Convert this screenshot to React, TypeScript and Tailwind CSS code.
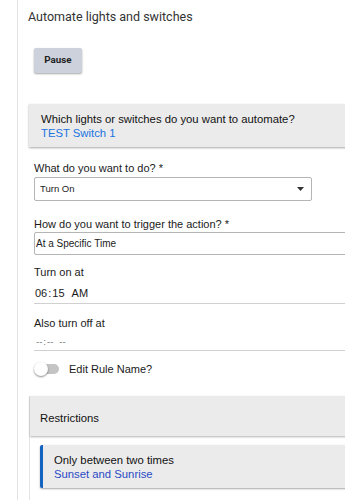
import React from "react";

export default function App() {
  const body = { fontFamily: '"Liberation Sans", Arial, sans-serif' };
  return (
    <div className="w-[345px] h-[500px] overflow-hidden bg-white flex" style={body}>
      <div className="w-[17px] shrink-0" />
      <div className="flex-1 border-l border-[#e2e2e2] flex flex-col min-w-0">
        <div
          className="ml-[10px] mt-[7px] text-[12.5px] leading-[20px] text-[#333] whitespace-nowrap"
          style={{ fontFamily: "Roboto, sans-serif" }}
        >
          Automate lights and switches
        </div>
        <div className="ml-[16px] mt-[19px]">
          <button
            className="w-[48px] h-[25px] bg-[#cdd1dc] rounded-[2px] shadow-[0_1px_2px_rgba(0,0,0,0.35)] text-[9.8px] font-bold text-[#222]"
            style={{ fontFamily: "Roboto, sans-serif" }}
          >
            Pause
          </button>
        </div>

        <div className="ml-[11px] mt-[31px] w-[330px] bg-[#ebebeb] pl-[12px] pt-[8px] pb-[7px] shadow-[0_1px_2px_rgba(0,0,0,0.35)] text-[11.3px] leading-[14px]">
          <div className="text-[#111] whitespace-nowrap">Which lights or switches do you want to automate?</div>
          <div className="text-[#1a73e0]">TEST Switch 1</div>
        </div>

        <div className="ml-[16px] flex flex-col">
          <div className="mt-[13px] text-[11px] leading-[16px] text-[#1a1a1a]">What do you want to do? *</div>
          <div className="mt-[1px] w-[278px] h-[24px] border border-[#b5b5b5] rounded-[2px] flex items-center justify-between pl-[5px] pr-[7px]">
            <span className="text-[9.5px] text-[#222]">Turn On</span>
            <svg width="7" height="4" viewBox="0 0 7 4">
              <polygon points="0,0 7,0 3.5,4" fill="#333" />
            </svg>
          </div>

          <div className="mt-[15px] text-[11px] leading-[16px] text-[#1a1a1a] whitespace-nowrap">
            How do you want to trigger the action? *
          </div>
          <div className="w-[330px] h-[23px] border border-[#b5b5b5] rounded-[2px] flex items-center pl-[1px]">
            <span className="text-[10px] text-[#222]">At a Specific Time</span>
          </div>

          <div className="mt-[9px] text-[11px] leading-[16px] text-[#1a1a1a]">Turn on at</div>
          <div className="w-[330px] pt-[5px] pb-[2px] border-b border-[#d0d0d0] flex items-center text-[11px] leading-[16px] text-[#1a1a1a] pl-[1px]">
            <span>06</span>
            <span className="ml-[1px]">:</span>
            <span className="ml-[1px]">15</span>
            <span className="ml-[7px]">AM</span>
          </div>

          <div className="mt-[11px] text-[11px] leading-[16px] text-[#1a1a1a]">Also turn off at</div>
          <div className="w-[330px] pt-[3px] pb-0 border-b border-[#d0d0d0] flex items-center text-[9.5px] leading-[16px] text-[#777] pl-[2px]">
            <span>--</span>
            <span className="ml-[1px]">:</span>
            <span className="ml-[1px]">--</span>
            <span className="ml-[6px]">--</span>
          </div>

          <div className="mt-[10px] flex items-center h-[16px]">
            <div className="relative w-[25px] h-[14px]">
              <div className="absolute left-[5px] top-[2px] w-[20px] h-[10px] rounded-full bg-[#c4c4c4]" />
              <div className="absolute left-0 top-0 w-[14px] h-[14px] rounded-full bg-white shadow-[0_1px_2px_rgba(0,0,0,0.45)]" />
            </div>
            <span className="ml-[10px] text-[11px] text-[#1a1a1a]">Edit Rule Name?</span>
          </div>
        </div>

        <div className="ml-[11px] mt-[19px] w-[330px] flex-1 border-l border-[#e4e4e4] flex flex-col">
          <div className="h-[40px] bg-[#ebebeb] shadow-[0_1px_2px_rgba(0,0,0,0.3)] pl-[10px] pt-[14px] text-[11.3px] leading-[16px] text-[#111]">
            Restrictions
          </div>
          <div className="ml-[10px] mt-[9px] h-[43px] bg-[#ebebeb] border-l-[3px] border-[#1565c0] rounded-l-[2px] shadow-[0_1px_2px_rgba(0,0,0,0.35)] pl-[11px] pt-[8px] text-[11.3px] leading-[14px]">
            <div className="text-[#111]">Only between two times</div>
            <div className="text-[#2a4bc6]">Sunset and Sunrise</div>
          </div>
        </div>
      </div>
    </div>
  );
}
